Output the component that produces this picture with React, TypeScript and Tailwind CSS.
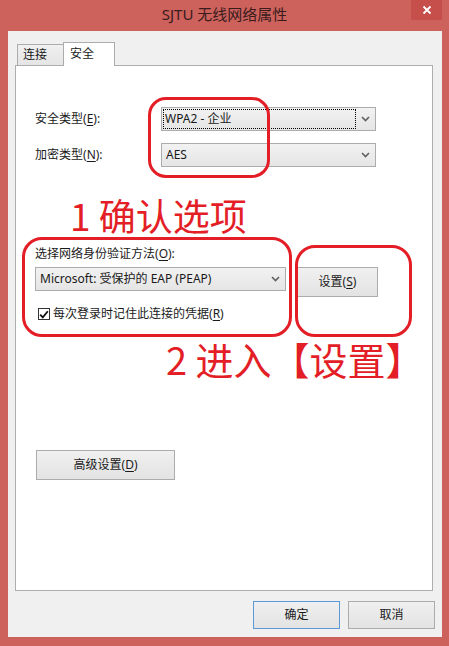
import React from "react";

const FONT = '"Noto Sans", "Noto Sans CJK SC", sans-serif';

function Chevron() {
  return (
    <svg width="9" height="6" viewBox="0 0 9 6" className="shrink-0">
      <path d="M1 1 L4.5 4.5 L8 1" fill="none" stroke="#606060" strokeWidth="1.6" />
    </svg>
  );
}

function Select({ text, focused, className }: { text: string; focused?: boolean; className: string }) {
  return (
    <div
      className={`flex items-center h-[24px] border border-[#acacac] bg-gradient-to-b from-[#f2f2f2] to-[#e5e5e5] ${className}`}
    >
      {focused ? (
        <div className="flex-1 self-stretch m-[1px] border border-dotted border-black flex items-center pl-[1px]">
          {text}
        </div>
      ) : (
        <div className="flex-1 pl-[4px]">{text}</div>
      )}
      <div className="w-[18px] flex justify-center pr-[2px]">
        <Chevron />
      </div>
    </div>
  );
}

function Btn({ children, className }: { children: React.ReactNode; className: string }) {
  return (
    <div
      className={`flex items-center justify-center border bg-gradient-to-b from-[#f0f0f0] to-[#e3e3e3] ${className}`}
    >
      {children}
    </div>
  );
}

function Key({ k }: { k: string }) {
  return (
    <>
      (<span className="underline underline-offset-2">{k}</span>)
    </>
  );
}

export default function App() {
  return (
    <div
      className="relative w-[449px] h-[646px] bg-[#cd615c] flex flex-col text-[12px] text-[#1a1a1a] overflow-hidden"
      style={{ fontFamily: FONT }}
    >
      {/* title bar */}
      <div className="relative h-[31px] flex items-center justify-center">
        <span className="text-[15px] text-[#3a1c1c] pb-[2px]">SJTU 无线网络属性</span>
        <div className="absolute right-[7px] top-0 w-[31px] h-[20px] bg-[#c64e4b] flex items-center justify-center">
          <svg width="10" height="10" viewBox="0 0 10 10">
            <path d="M1.5 1.5 L8.5 8.5 M8.5 1.5 L1.5 8.5" stroke="white" strokeWidth="1.8" />
          </svg>
        </div>
      </div>

      {/* client area */}
      <div className="ml-[8px] w-[434px] h-[606px] bg-[#f0f0f0] pt-[10px]">
        {/* tabs */}
        <div className="flex items-end h-[24px] ml-[9px]">
          <div className="w-[47px] h-[21px] border border-b-0 border-[#acacac] bg-gradient-to-b from-[#f0f0f0] to-[#e5e5e5] flex items-center pl-[5px]">
            连接
          </div>
          <div className="relative z-10 -ml-px w-[52px] h-[24px] -mb-px border border-b-0 border-[#acacac] bg-white flex items-start pt-[2px] pl-[6px]">
            安全
          </div>
        </div>

        {/* panel */}
        <div className="ml-[7px] w-[418px] h-[526px] border border-[#adadad] bg-white pl-[19px]">
          <div className="mt-[41px] flex items-center">
            <div className="w-[126px]">
              安全类型<Key k="E" />:
            </div>
            <Select text="WPA2 - 企业" focused className="w-[215px]" />
          </div>
          <div className="mt-[12px] flex items-center">
            <div className="w-[126px]">
              加密类型<Key k="N" />:
            </div>
            <Select text="AES" className="w-[215px]" />
          </div>

          <div className="mt-[79px] h-[16px] leading-[16px]">
            选择网络身份验证方法<Key k="O" />:
          </div>
          <div className="mt-[5px] flex items-start">
            <Select text="Microsoft: 受保护的 EAP (PEAP)" className="w-[251px]" />
            <Btn className="ml-[11px] w-[81px] h-[30px] border-[#acacac]">
              设置<Key k="S" />
            </Btn>
          </div>

          <div className="mt-[9px] h-[16px] flex items-center">
            <div className="ml-[3px] w-[12px] h-[12px] border border-[#333] bg-white flex items-center justify-center">
              <svg width="10" height="9" viewBox="0 0 10 9">
                <path d="M1.2 4.6 L3.8 7.3 L8.8 1.2" fill="none" stroke="#111" strokeWidth="1.8" />
              </svg>
            </div>
            <span className="ml-[3px]">
              每次登录时记住此连接的凭据<Key k="R" />
            </span>
          </div>

          <Btn className="mt-[128px] ml-[1px] w-[139px] h-[30px] border-[#acacac]">
            高级设置<Key k="D" />
          </Btn>
        </div>

        {/* dialog buttons */}
        <div className="mt-[10px] flex justify-end gap-[8px] pr-[7px]">
          <Btn className="w-[87px] h-[28px] border-[#5b9bd5]">确定</Btn>
          <Btn className="w-[87px] h-[28px] border-[#acacac]">取消</Btn>
        </div>
      </div>

      {/* red annotations */}
      <div className="absolute left-[148px] top-[97px] w-[122px] h-[81px] border-[3px] border-[#e31e26] rounded-[18px]" />
      <div className="absolute left-[22px] top-[237px] w-[270px] h-[100px] border-[3px] border-[#e31e26] rounded-[20px]" />
      <div className="absolute left-[295px] top-[245px] w-[117px] h-[92px] border-[3px] border-[#e31e26] rounded-[20px]" />
      <div
        className="absolute left-[70px] top-[197px] text-[37px] leading-none text-[#e31e26] whitespace-nowrap"
        style={{ fontFamily: '"Noto Sans CJK SC", sans-serif' }}
      >
        1 确认选项
      </div>
      <div
        className="absolute left-[166px] top-[340px] text-[38px] leading-none text-[#e31e26] whitespace-nowrap"
        style={{ fontFamily: '"Noto Sans CJK SC", sans-serif' }}
      >
        2 进入【设置】
      </div>
    </div>
  );
}
